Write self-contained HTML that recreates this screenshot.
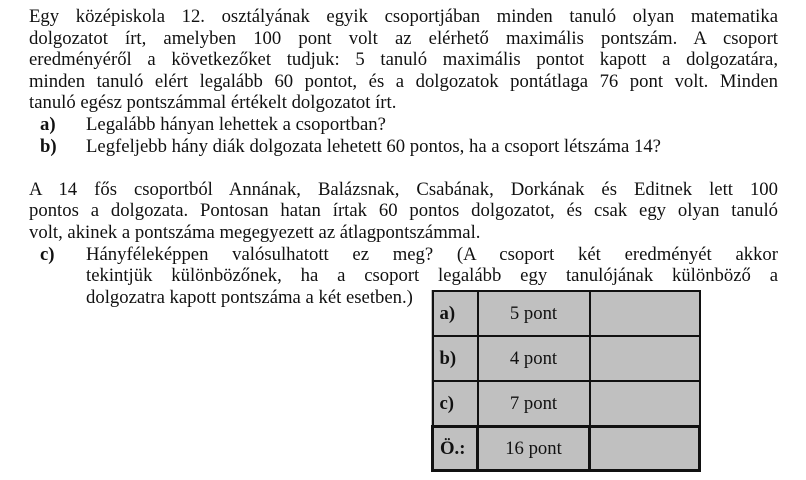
<!DOCTYPE html>
<html><head><meta charset="utf-8"><style>
body{margin:0;width:806px;height:480px;background:#fff;position:relative;overflow:hidden;font-family:"Liberation Serif",serif;font-size:18.7px;color:#111}
.l{position:absolute;height:21.6px;line-height:21.6px;white-space:nowrap}
.j{text-align:justify;text-align-last:justify;white-space:normal}
b{font-weight:bold}
table{position:absolute;left:431px;top:290px;border-collapse:collapse;background:#c0c0c0}
td{border:2px solid #111;height:43px;padding:0 6px;font-size:18.7px}
tr.t td{border:3px solid #111;height:41px}
</style></head><body>
<div class="l j" style="left:29px;width:749px;top:6px">Egy középiskola 12. osztályának egyik csoportjában minden tanuló olyan matematika</div>
<div class="l j" style="left:29px;width:749px;top:27.6px">dolgozatot írt, amelyben 100 pont volt az elérhető maximális pontszám. A csoport</div>
<div class="l j" style="left:29px;width:749px;top:49.2px">eredményéről a következőket tudjuk: 5 tanuló maximális pontot kapott a dolgozatára,</div>
<div class="l j" style="left:29px;width:749px;top:70.8px">minden tanuló elért legalább 60 pontot, és a dolgozatok pontátlaga 76 pont volt. Minden</div>
<div class="l" style="left:29px;top:92.4px">tanuló egész pontszámmal értékelt dolgozatot írt.</div>
<div class="l" style="left:40px;top:114px"><b>a)</b></div>
<div class="l" style="left:86px;top:114px">Legalább hányan lehettek a csoportban?</div>
<div class="l" style="left:40px;top:135.6px"><b>b)</b></div>
<div class="l" style="left:86px;top:135.6px">Legfeljebb hány diák dolgozata lehetett 60 pontos, ha a csoport létszáma 14?</div>
<div class="l j" style="left:29px;width:749px;top:178.8px">A 14 fős csoportból Annának, Balázsnak, Csabának, Dorkának és Editnek lett 100</div>
<div class="l j" style="left:29px;width:749px;top:200.4px">pontos a dolgozata. Pontosan hatan írtak 60 pontos dolgozatot, és csak egy olyan tanuló</div>
<div class="l" style="left:29px;top:222px">volt, akinek a pontszáma megegyezett az átlagpontszámmal.</div>
<div class="l" style="left:40px;top:243.6px"><b>c)</b></div>
<div class="l j" style="left:86px;width:692px;top:243.6px">Hányféleképpen valósulhatott ez meg? (A csoport két eredményét akkor</div>
<div class="l j" style="left:86px;width:692px;top:265.2px">tekintjük különbözőnek, ha a csoport legalább egy tanulójának különböző a</div>
<div class="l" style="left:86px;top:286.8px">dolgozatra kapott pontszáma a két esetben.)</div>
<table>
<tr><td style="width:31px"><b>a)</b></td><td style="width:98px;text-align:center">5 pont</td><td style="width:96px"></td></tr>
<tr><td><b>b)</b></td><td style="text-align:center">4 pont</td><td></td></tr>
<tr><td><b>c)</b></td><td style="text-align:center">7 pont</td><td></td></tr>
<tr class="t"><td><b>Ö.:</b></td><td style="text-align:center">16 pont</td><td></td></tr>
</table>
</body></html>
